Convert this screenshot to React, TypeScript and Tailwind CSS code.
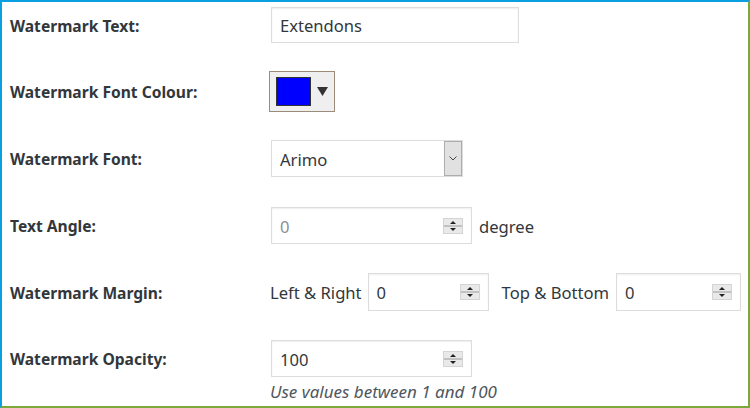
import React from 'react';

const font = { fontFamily: '"Noto Sans", "Open Sans", sans-serif' };

// little native-looking up/down spinner used in the number fields
const Spinner: React.FC = () => (
  <svg width="20" height="16" viewBox="0 0 20 16" className="shrink-0">
    <rect x="0.5" y="0.5" width="19" height="15" fill="#e9e9e9" stroke="#d4d4d4" />
    <line x1="1" y1="8" x2="19" y2="8" stroke="#9a9a9a" />
    <path d="M7 6 L10 3 L13 6 Z" fill="#222" />
    <path d="M7 10 L10 13 L13 10 Z" fill="#222" />
  </svg>
);

const NumberField: React.FC<{ value: string; width: string; muted?: boolean }> = ({ value, width, muted }) => (
  <div
    className={`flex items-center h-full border border-[#dddddd] bg-white pl-[8px] pr-[8px] shadow-[inset_0_1px_2px_rgba(0,0,0,0.07)] ${width}`}
  >
    <span className={`flex-1 pt-[3px] text-[16.6px] ${muted ? 'text-[#8c8f94]' : 'text-[#32373c]'}`}>{value}</span>
    <Spinner />
  </div>
);

const Label: React.FC<{ children: React.ReactNode }> = ({ children }) => (
  <div className="w-[260px] shrink-0 pl-[10px] pt-[3px] text-[15.6px] font-bold text-[#32373c]">{children}</div>
);

const Text: React.FC<{ className?: string; children: React.ReactNode }> = ({ className = '', children }) => (
  <span className={`pt-[3px] text-[16.6px] text-[#32373c] ${className}`}>{children}</span>
);

export default function App() {
  return (
    <div
      className="w-[750px] h-[408px] bg-white border-t-2 border-l-2 border-t-[#0a9fe0] border-l-[#0a9fe0] border-r-2 border-b-2 border-r-[#78a93a] border-b-[#78a93a] overflow-hidden"
      style={font}
    >
      <div className="flex flex-col pt-[5px] -ml-[2px]">
        {/* Watermark Text */}
        <div className="flex items-center h-[36px]">
          <Label>Watermark Text:</Label>
          <div className="ml-[11px] w-[248px] h-full border border-[#dddddd] flex items-center pl-[8px] shadow-[inset_0_1px_2px_rgba(0,0,0,0.07)]">
            <Text>Extendons</Text>
          </div>
        </div>

        {/* Font colour */}
        <div className="flex items-center h-[41px] mt-[28px]">
          <Label>Watermark Font Colour:</Label>
          <div className="ml-[9px] w-[66px] h-full bg-[#efefef] border border-[#9c8b7b] flex items-center pl-[6px] gap-[6px]">
            <div className="w-[35px] h-[29px] bg-[#0000ff] border border-[#333333]" />
            <svg width="11" height="9" viewBox="0 0 11 9">
              <path d="M0 0 H11 L5.5 9 Z" fill="#333333" />
            </svg>
          </div>
        </div>

        {/* Font */}
        <div className="flex items-center h-[37px] mt-[28px]">
          <Label>Watermark Font:</Label>
          <div className="ml-[11px] w-[192px] h-full border border-[#dddddd] bg-white flex items-stretch">
            <div className="flex-1 flex items-center pl-[8px]">
              <Text>Arimo</Text>
            </div>
            <div className="w-[18px] bg-[#e1e1e1] border border-[#adadad] flex items-center justify-center">
              <svg width="8" height="5" viewBox="0 0 8 5">
                <path d="M0.5 0.5 L4 4 L7.5 0.5" fill="none" stroke="#444" strokeWidth="1" />
              </svg>
            </div>
          </div>
        </div>

        {/* Text angle */}
        <div className="flex items-center h-[37px] mt-[30px]">
          <Label>Text Angle:</Label>
          <div className="ml-[11px] h-full">
            <NumberField value="0" width="w-[201px]" muted />
          </div>
          <Text className="ml-[7px]">degree</Text>
        </div>

        {/* Margin */}
        <div className="flex items-center h-[38px] mt-[29px]">
          <Label>Watermark Margin:</Label>
          <Text className="ml-[10px]">Left &amp; Right</Text>
          <div className="ml-[6px] h-full">
            <NumberField value="0" width="w-[121px]" />
          </div>
          <Text className="ml-[13px]">Top &amp; Bottom</Text>
          <div className="ml-[7px] h-full">
            <NumberField value="0" width="w-[125px]" />
          </div>
        </div>

        {/* Opacity */}
        <div className="flex items-center h-[37px] mt-[29px]">
          <Label>Watermark Opacity:</Label>
          <div className="ml-[11px] h-full">
            <NumberField value="100" width="w-[201px]" />
          </div>
        </div>
        <div className="pl-[270px] mt-[4px] text-[17px] italic text-[#50575e] leading-[22px]">
          Use values between 1 and 100
        </div>
      </div>
    </div>
  );
}
